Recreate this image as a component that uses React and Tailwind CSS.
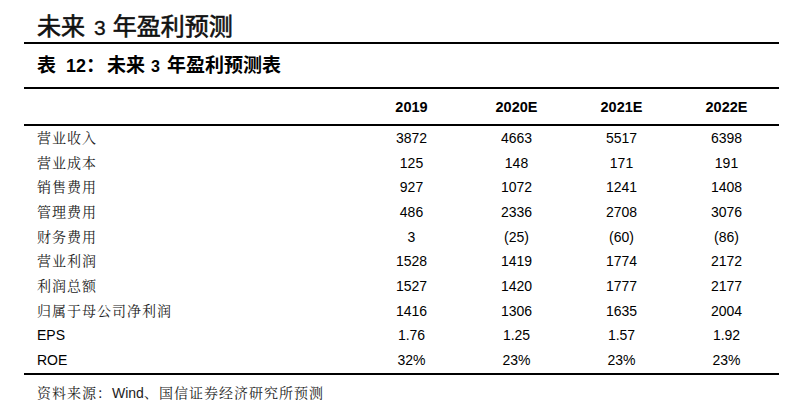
import React from "react";

const rows = [
  ["营业收入", "3872", "4663", "5517", "6398", true],
  ["营业成本", "125", "148", "171", "191", true],
  ["销售费用", "927", "1072", "1241", "1408", true],
  ["管理费用", "486", "2336", "2708", "3076", true],
  ["财务费用", "3", "(25)", "(60)", "(86)", true],
  ["营业利润", "1528", "1419", "1774", "2172", true],
  ["利润总额", "1527", "1420", "1777", "2177", true],
  ["归属于母公司净利润", "1416", "1306", "1635", "2004", true],
  ["EPS", "1.76", "1.25", "1.57", "1.92", false],
  ["ROE", "32%", "23%", "23%", "23%", false],
];

const sans = { fontFamily: '"Liberation Sans", Arial, "Noto Sans CJK SC", sans-serif' };
const hei = { fontFamily: '"Noto Sans CJK SC", "Liberation Sans", sans-serif' };
const song = { fontFamily: '"Liberation Sans", "Noto Serif CJK SC", "Noto Sans CJK SC", serif' };

export default function App() {
  return (
    <div className="w-[807px] h-[414px] bg-white text-black overflow-hidden">
      <div className="ml-[24px] w-[755px]">
        <div className="h-[44px] border-b-2 border-black flex items-center pl-[13px] pt-[9px]">
          <div className="flex items-baseline text-[24px] leading-none text-[#111] [-webkit-text-stroke:0.6px_#111]" style={hei}>
            <span>未来</span>
            <span className="ml-[9px] mr-[7px] text-[21px] [-webkit-text-stroke:0.3px_#111]" style={sans}>3</span>
            <span>年盈利预测</span>
          </div>
        </div>
        <div className="h-[45px] border-b-2 border-black flex items-center pl-[13px] pb-[2px]">
          <div className="flex items-baseline text-[19px] font-bold leading-none" style={hei}>
            <span>表</span>
            <span className="ml-[10px] text-[18px]" style={sans}>12</span>
            <span>：</span>
            <span className="ml-[2px]">未来</span>
            <span className="ml-[6px] mr-[7px] text-[16px]" style={sans}>3</span>
            <span>年盈利预测表</span>
          </div>
        </div>
        <div className="h-[37px] border-b-2 border-black flex items-center pt-[2px] text-[14.5px] font-bold" style={sans}>
          <div className="w-[335px]" />
          <div className="w-[105px] text-center">2019</div>
          <div className="w-[105px] text-center">2020E</div>
          <div className="w-[105px] text-center">2021E</div>
          <div className="w-[105px] text-center">2022E</div>
        </div>
        <div className="border-b-2 border-black">
          {rows.map((r) => (
            <div key={r[0]} className="h-[24.7px] flex items-center text-[14px]" style={sans}>
              <div
                className={"w-[335px] pl-[13px] " + (r[5] ? "tracking-[1px] text-[#222]" : "")}
                style={song}
              >
                {r[0]}
              </div>
              <div className="w-[105px] text-center">{r[1]}</div>
              <div className="w-[105px] text-center">{r[2]}</div>
              <div className="w-[105px] text-center">{r[3]}</div>
              <div className="w-[105px] text-center">{r[4]}</div>
            </div>
          ))}
        </div>
        <div className="pl-[13px] pt-[8px] text-[14px] tracking-[1px] text-[#222]" style={song}>
          资料来源：<span className="tracking-normal">Wind</span>、国信证券经济研究所预测
        </div>
      </div>
    </div>
  );
}
